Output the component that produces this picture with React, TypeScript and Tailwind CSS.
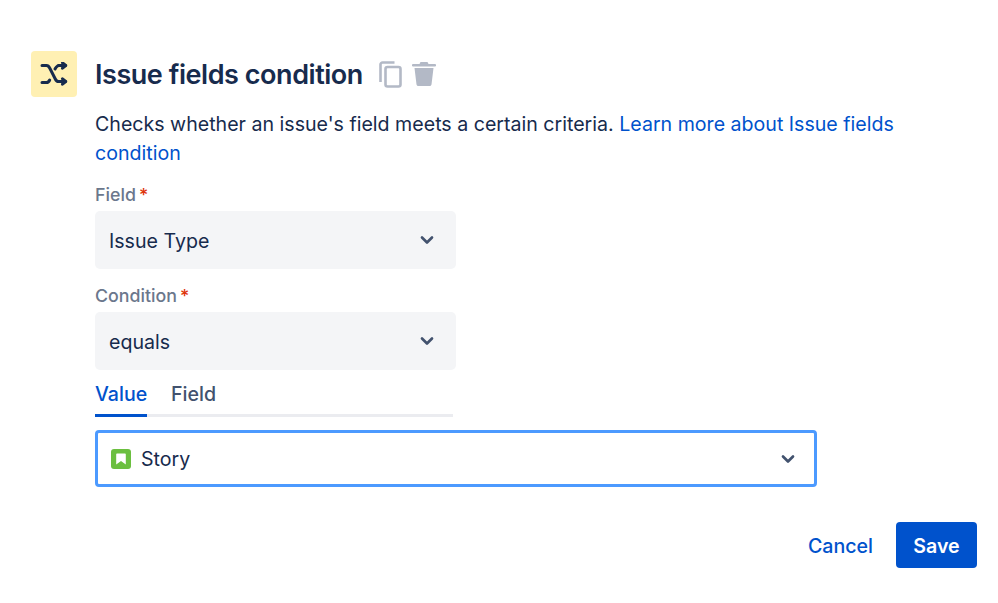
import { ChevronDown } from "lucide-react";

const font = { fontFamily: "Inter, sans-serif" };

function ShuffleIcon() {
  return (
    <svg width="28" height="24" viewBox="0 0 28 24" fill="none" stroke="#172b4d" strokeWidth="3" strokeLinecap="round" strokeLinejoin="round">
      <path d="M2 3.500h4.500c1.500 0 2.500 1 3.200 2.500l5.600 11c.7 1.500 1.700 2.500 3.200 2.500h7" />
      <path d="M2 20.500h4.500c1.500 0 2.500-1 3.200-2.500M15 7c.7-1.500 1.700-2.500 3.200-3.500h7.300" />
      <path d="M22.500 .8l3.200 2.700-3.200 2.700M22.500 16.800l3.200 2.700-3.200 2.700" />
    </svg>
  );
}

function CopyIcon() {
  return (
    <svg width="23" height="27" viewBox="0 0 23 27" fill="none" stroke="#b3b9c6" strokeWidth="2.600" strokeLinejoin="round">
      <rect x="6.500" y="6" width="15" height="19.500" rx="2" />
      <path d="M1.500 21V3.500c0-1 1-2 2-2h12" />
    </svg>
  );
}

function TrashIcon() {
  return (
    <svg width="24" height="26" viewBox="0 0 24 26" fill="#b3b9c6">
      <path d="M8.500 1h7l1 2h6.500a1 1 0 0 1 0 2.500H1A1 1 0 0 1 1 3h6.500z" />
      <path d="M2.500 7h19l-2 16.500A2 2 0 0 1 17.500 25h-11a2 2 0 0 1-2-1.500z" />
    </svg>
  );
}

function StoryIcon() {
  return (
    <svg width="20" height="20" viewBox="0 0 20 20">
      <rect width="20" height="20" rx="3" fill="#6bbf3f" />
      <path d="M6 4.500h8a.8.8 0 0 1 .8.8V15.500L10 12l-4.800 3.500V5.300A.8.8 0 0 1 6 4.500z" fill="#fff" />
    </svg>
  );
}

function Label({ text }: { text: string }) {
  return (
    <div className="flex h-6 items-center pt-[2px] text-[17.800px] font-medium text-[#6b778c]">
      {text}
      <span className="ml-[3px] text-[#de350b]">*</span>
    </div>
  );
}

function SelectBox({ value }: { value: string }) {
  return (
    <div className="mt-[5px] flex h-[58px] w-[361px] items-center justify-between rounded-[5px] bg-[#f4f5f7] pl-[14px] pr-[19px] text-[19.600px] text-[#172b4d]">
      <span className="pt-[3px]">{value}</span>
      <ChevronDown size={20} strokeWidth={3.2} className="text-[#42526e]" />
    </div>
  );
}

export default function App() {
  return (
    <div style={font} className="h-[603px] w-[998px] overflow-hidden bg-white pl-[31px] pr-[21px] pt-[51px]">
      <div className="flex h-[46px] items-center">
        <div className="flex h-[46px] w-[46px] items-center justify-center rounded-[4px] bg-[#fff0b3]">
          <ShuffleIcon />
        </div>
        <h1 className="ml-[18px] pt-[2px] text-[27px] font-semibold tracking-[-0.45px] text-[#172b4d]">Issue fields condition</h1>
        <div className="ml-[16px] flex items-center gap-[10px]">
          <CopyIcon />
          <TrashIcon />
        </div>
      </div>

      <div className="ml-[64px]">
        <p className="mt-[13px] w-[830px] text-[19.600px] leading-[29px] text-[#172b4d]">
          Checks whether an issue's field meets a certain criteria.{" "}
          <span className="text-[#0052cc]">Learn more about Issue fields condition</span>
        </p>

        <div className="mt-[14px]">
          <Label text="Field" />
          <SelectBox value="Issue Type" />
        </div>
        <div className="mt-[14px]">
          <Label text="Condition" />
          <SelectBox value="equals" />
        </div>

        <div className="mt-[9px] flex h-[38px] w-[358px] gap-6 border-b-[3px] border-[#ebecf0] pt-[1px] text-[19.600px] font-medium">
          <div className="-mb-[3px] w-[52px] border-b-[3px] border-[#0052cc] text-[#0052cc]">Value</div>
          <div className="text-[#42526e]">Field</div>
        </div>

        <div className="mt-[13px] flex h-[57px] w-[722px] items-center rounded-[4px] border-[3px] border-[#4c9aff] pl-[13px] pr-[16px] text-[19.600px] text-[#172b4d]">
          <StoryIcon />
          <span className="ml-[10px] flex-1 pt-[2px]">Story</span>
          <ChevronDown size={20} strokeWidth={3.2} className="text-[#42526e]" />
        </div>
      </div>

      <div className="mt-[35px] flex items-center justify-end">
        <span className="mr-[23px] pt-[4px] text-[19.600px] font-medium text-[#0052cc]">Cancel</span>
        <button className="h-[46px] w-[81px] rounded-[4px] bg-[#0052cc] pt-[4px] text-[19.600px] font-semibold text-white">Save</button>
      </div>
    </div>
  );
}
